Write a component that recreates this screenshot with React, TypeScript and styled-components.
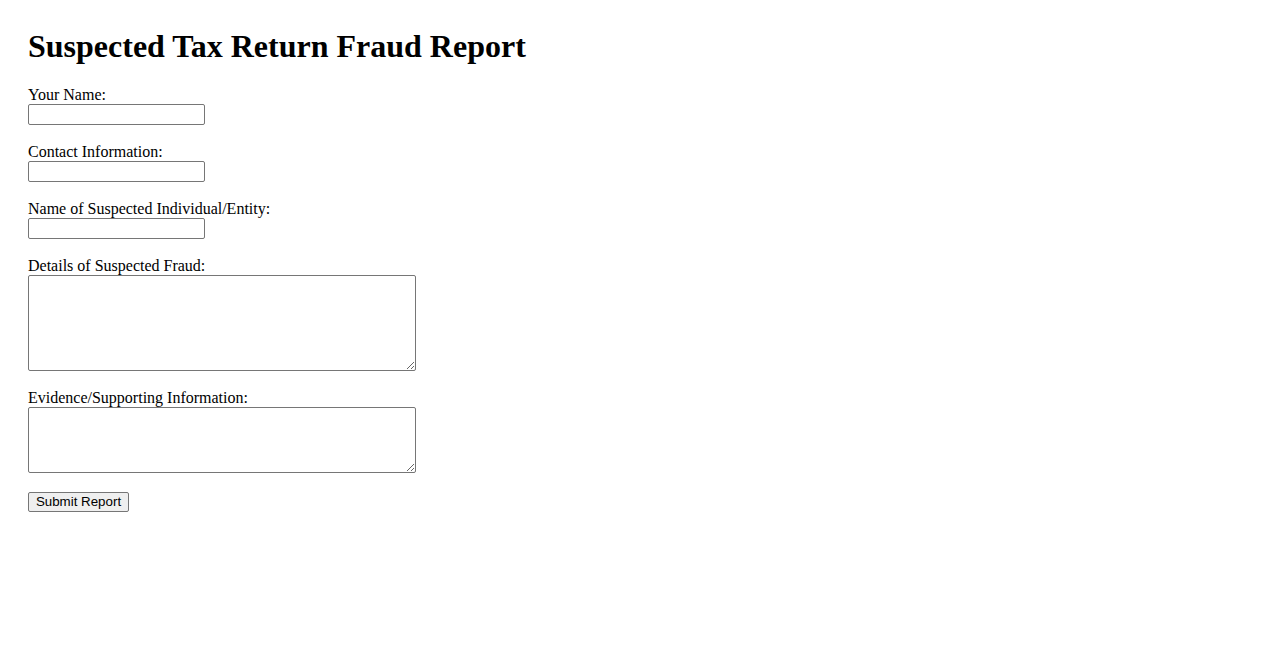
import React from "react";
import styled, { createGlobalStyle } from "styled-components";

const GlobalStyle = createGlobalStyle`
  html, body {
    margin: 0;
    padding: 0;
    background: #ffffff;
  }
  body {
    font-family: "Liberation Serif", "Times New Roman", serif;
    color: #000000;
  }
`;

const Page = styled.div`
  padding: 28px;
`;

const Title = styled.h1`
  margin: 0 0 20px 0;
  font-family: "Liberation Serif", "Times New Roman", serif;
  font-size: 32px;
  font-weight: bold;
  line-height: 37px;
`;

const Form = styled.form`
  display: flex;
  flex-direction: column;
  align-items: flex-start;
`;

const Field = styled.div<{ $gap?: number }>`
  display: flex;
  flex-direction: column;
  align-items: flex-start;
  margin-bottom: ${(p) => (p.$gap ?? 17)}px;
`;

const Label = styled.label`
  display: block;
  font-family: "Liberation Serif", "Times New Roman", serif;
  font-size: 16px;
  line-height: 19px;
  height: 19px;
`;

const TextInput = styled.input`
  box-sizing: border-box;
  width: 177px;
  height: 21px;
  margin: 0;
  padding: 1px 2px;
  border: 1px solid #767676;
  border-radius: 2px;
  background: #ffffff;
  font-family: "Liberation Sans", Arial, sans-serif;
  font-size: 13.33px;
`;

const TextArea = styled.textarea<{ $h: number }>`
  box-sizing: border-box;
  width: 388px;
  height: ${(p) => p.$h}px;
  margin: 0;
  padding: 2px;
  border: 1px solid #767676;
  border-radius: 2px;
  background: #ffffff;
  font-family: "Liberation Mono", monospace;
  font-size: 13.33px;
  resize: both;
  display: block;
`;

const SubmitButton = styled.button`
  box-sizing: border-box;
  width: 101px;
  height: 20px;
  margin: 0;
  padding: 1px 6px;
  border: 1px solid #767676;
  border-radius: 2px;
  background: #efefef;
  color: #000000;
  font-family: "Liberation Sans", Arial, sans-serif;
  font-size: 13.33px;
  line-height: 16px;
  text-align: center;
`;

export default function App() {
  return (
    <>
      <GlobalStyle />
      <Page>
        <Title>Suspected Tax Return Fraud Report</Title>
        <Form onSubmit={(e) => e.preventDefault()}>
          <Field>
            <Label htmlFor="name">Your Name:</Label>
            <TextInput id="name" type="text" />
          </Field>
          <Field>
            <Label htmlFor="contact">Contact Information:</Label>
            <TextInput id="contact" type="text" />
          </Field>
          <Field>
            <Label htmlFor="suspect">Name of Suspected Individual/Entity:</Label>
            <TextInput id="suspect" type="text" />
          </Field>
          <Field>
            <Label htmlFor="details">Details of Suspected Fraud:</Label>
            <TextArea id="details" $h={96} />
          </Field>
          <Field $gap={19}>
            <Label htmlFor="evidence">Evidence/Supporting Information:</Label>
            <TextArea id="evidence" $h={66} />
          </Field>
          <SubmitButton type="submit">Submit Report</SubmitButton>
        </Form>
      </Page>
    </>
  );
}
